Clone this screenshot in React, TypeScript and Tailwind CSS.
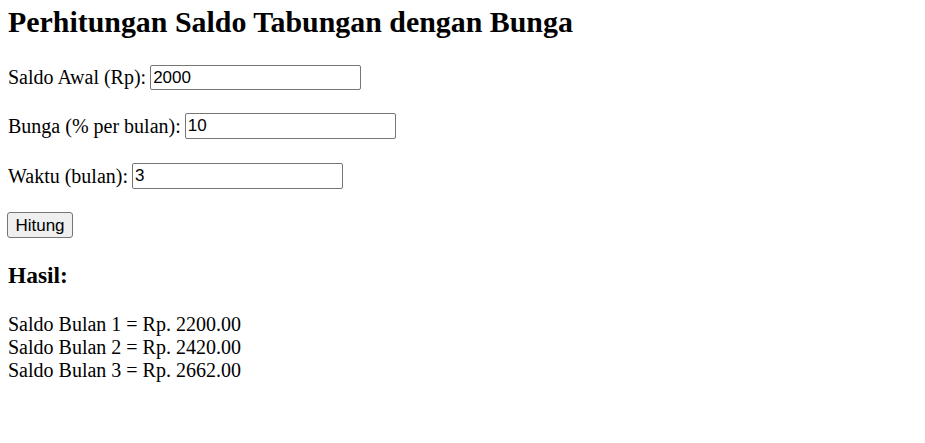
import { useState } from 'react';

export default function App() {
  const [saldo, setSaldo] = useState('2000');
  const [bunga, setBunga] = useState('10');
  const [waktu, setWaktu] = useState('3');

  const hasil: number[] = [];
  let s = parseFloat(saldo) || 0;
  for (let i = 0; i < (parseInt(waktu) || 0); i++) {
    s = s + (s * (parseFloat(bunga) || 0)) / 100;
    hasil.push(s);
  }

  const inputCls =
    "h-full w-[211px] rounded-[2px] border border-[#767676] bg-white px-[2px] font-['Liberation_Sans'] text-[17px] text-black outline-none";

  return (
    <div className="min-h-screen bg-white px-2 pt-[5px] font-['Liberation_Serif',serif] text-[20px] leading-[23px] text-black">
      <h2 className="text-[29.9px] font-bold leading-[34px]">Perhitungan Saldo Tabungan dengan Bunga</h2>

      <div className="mt-[26px] flex h-[25px] items-center gap-[4px]">
        <label>Saldo Awal (Rp):</label>
        <input className={inputCls} value={saldo} onChange={(e) => setSaldo(e.target.value)} />
      </div>

      <div className="mt-[23px] flex h-[26px] items-center gap-[4px]">
        <label>Bunga (% per bulan):</label>
        <input className={inputCls} value={bunga} onChange={(e) => setBunga(e.target.value)} />
      </div>

      <div className="mt-[24px] flex h-[26px] items-center gap-[4px]">
        <label>Waktu (bulan):</label>
        <input className={inputCls} value={waktu} onChange={(e) => setWaktu(e.target.value)} />
      </div>

      <button className="-ml-px mt-[23px] h-[26px] w-[66px] rounded-[3px] border border-[#767676] bg-[#efefef] font-['Liberation_Sans'] text-[17px] leading-none text-black">
        Hitung
      </button>

      <h3 className="mt-[24px] text-[23.4px] font-bold leading-[27px]">Hasil:</h3>

      <div className="mt-[24px]">
        {hasil.map((v, i) => (
          <div key={i}>
            Saldo Bulan {i + 1} = Rp. {v.toFixed(2)}
          </div>
        ))}
      </div>
    </div>
  );
}
